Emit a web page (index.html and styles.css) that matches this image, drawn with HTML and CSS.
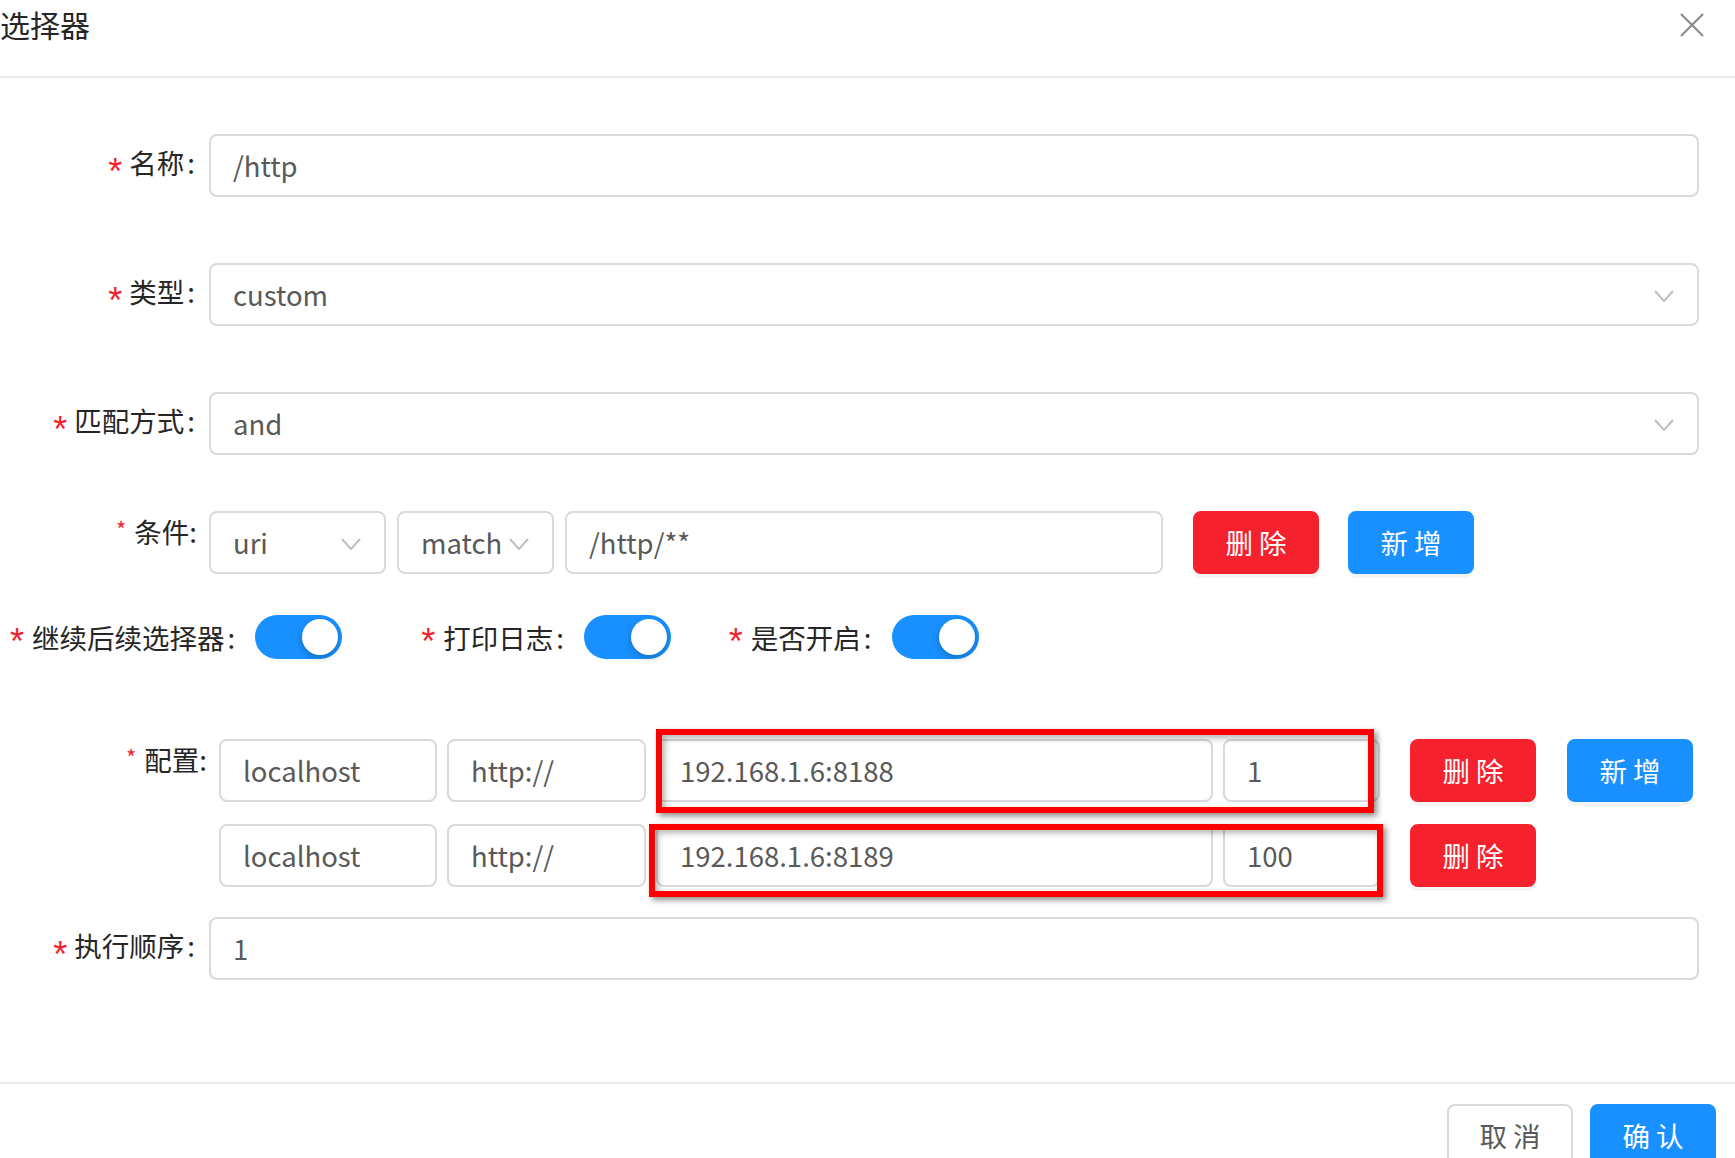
FILE: index.html
```html
<!DOCTYPE html>
<html lang="zh-CN">
<head>
<meta charset="utf-8">
<title>选择器</title>
<link rel="stylesheet" href="styles.css">
</head>
<body>
<div class="modal">
  <div class="modal-header">
    <div class="modal-title">选择器</div>
    <svg class="close" width="24" height="24" viewBox="0 0 24 24"><path d="M1 1 L23 23 M23 1 L1 23" stroke="#8c8c8c" stroke-width="2.2" fill="none"/></svg>
  </div>

  <div class="modal-body">
    <div class="row row-name">
      <div class="label"><span class="req">*</span>名称<span class="colon">:</span></div>
      <div class="input grow">/http</div>
    </div>

    <div class="row row-type">
      <div class="label"><span class="req">*</span>类型<span class="colon">:</span></div>
      <div class="input select grow">custom<svg class="arrow" width="20" height="12" viewBox="0 0 20 12"><path d="M1 1 L10 11 L19 1" stroke="#bfbfbf" stroke-width="2" fill="none"/></svg></div>
    </div>

    <div class="row row-match">
      <div class="label"><span class="req">*</span>匹配方式<span class="colon">:</span></div>
      <div class="input select grow">and<svg class="arrow" width="20" height="12" viewBox="0 0 20 12"><path d="M1 1 L10 11 L19 1" stroke="#bfbfbf" stroke-width="2" fill="none"/></svg></div>
    </div>

    <div class="row row-cond">
      <div class="label label-custom"><span class="req-small">*</span>条件:</div>
      <div class="input select w-uri">uri<svg class="arrow" width="20" height="12" viewBox="0 0 20 12"><path d="M1 1 L10 11 L19 1" stroke="#bfbfbf" stroke-width="2" fill="none"/></svg></div>
      <div class="input select w-op">match<svg class="arrow" width="20" height="12" viewBox="0 0 20 12"><path d="M1 1 L10 11 L19 1" stroke="#bfbfbf" stroke-width="2" fill="none"/></svg></div>
      <div class="input w-path">/http/**</div>
      <button class="btn btn-danger btn-gap">删 除</button>
      <button class="btn btn-primary btn-gap2">新 增</button>
    </div>

    <div class="row row-switch">
      <div class="sw-item sw-1">
        <span class="req">*</span><span class="sw-label">继续后续选择器<span class="colon">:</span></span>
        <span class="switch"><span class="knob"></span></span>
      </div>
      <div class="sw-item sw-2">
        <span class="req">*</span><span class="sw-label">打印日志<span class="colon">:</span></span>
        <span class="switch"><span class="knob"></span></span>
      </div>
      <div class="sw-item sw-3">
        <span class="req">*</span><span class="sw-label">是否开启<span class="colon">:</span></span>
        <span class="switch"><span class="knob"></span></span>
      </div>
    </div>

    <div class="config">
      <div class="row row-conf1">
        <div class="label label-custom label-conf"><span class="req-small">*</span>配置:</div>
        <div class="input w-host">localhost</div>
        <div class="input w-proto">http://</div>
        <div class="input w-ip">192.168.1.6:8188</div>
        <div class="input w-weight">1</div>
        <button class="btn btn-danger btn-gap">删 除</button>
        <button class="btn btn-primary btn-gap2">新 增</button>
      </div>
      <div class="row row-conf2">
        <div class="label label-conf"></div>
        <div class="input w-host">localhost</div>
        <div class="input w-proto">http://</div>
        <div class="input w-ip">192.168.1.6:8189</div>
        <div class="input w-weight">100</div>
        <button class="btn btn-danger btn-gap">删 除</button>
      </div>
      <div class="mark mark-1"></div>
      <div class="mark mark-2"></div>
    </div>

    <div class="row row-exec">
      <div class="label"><span class="req">*</span>执行顺序<span class="colon">:</span></div>
      <div class="input grow">1</div>
    </div>
  </div>

  <div class="modal-footer">
    <button class="btn btn-default">取 消</button>
    <button class="btn btn-primary">确 认</button>
  </div>
</div>
</body>
</html>
```

FILE: styles.css
```css
* { box-sizing: border-box; }
html, body {
  margin: 0;
  padding: 0;
  background: #fff;
}
body {
  font-family: "Noto Sans CJK SC", "Noto Sans", sans-serif;
  font-size: 27.5px;
  color: #595959;
  overflow: hidden;
}
.modal {
  width: 1735px;
  height: 1158px;
  overflow: hidden;
  background: #fff;
}
.modal-header {
  height: 78px;
  border-bottom: 2px solid #e8e8e8;
  display: flex;
  justify-content: space-between;
  align-items: flex-start;
  padding-right: 31px;
}
.modal-title {
  font-size: 30px;
  line-height: 48px;
  color: #262626;
  margin-left: 0;
}
.close {
  margin-top: 13px;
}
.modal-body {
  padding-top: 56px;
  height: 1004px;
}
.row {
  display: flex;
  align-items: center;
  height: 63px;
}
.row-type { margin-top: 66px; }
.row-match { margin-top: 66px; }
.row-cond { margin-top: 56px; }
.row-switch { margin-top: 41px; height: 44px; }
.config { position: relative; margin-top: 80px; }
.row-conf2 { margin-top: 22px; }
.row-exec { margin-top: 30px; }

.label {
  width: 209px;
  flex: none;
  text-align: right;
  padding-right: 14px;
  color: #262626;
  line-height: 40px;
  white-space: nowrap;
}
.req {
  color: #f5222d;
  font-family: "Liberation Sans", sans-serif;
  font-size: 36px;
  margin-right: 7px;
  vertical-align: -10px;
  line-height: 1;
}
.colon {
  margin-left: 3px;
}
.label-custom {
  align-self: flex-start;
  line-height: 26px;
  padding-top: 4px;
  padding-right: 12px;
}
.label-conf { width: 219px; }
.req-small {
  color: #f5222d;
  font-size: 22px;
  margin-right: 8px;
  vertical-align: 5px;
}

.input {
  height: 63px;
  border: 2px solid #d9d9d9;
  border-radius: 8px;
  padding: 0 22px;
  display: flex;
  align-items: center;
  line-height: 1;
  color: #595959;
  white-space: nowrap;
  flex: none;
  background: #fff;
}
.grow { width: 1490px; }
.select { position: relative; justify-content: space-between; padding-right: 23px; }
.arrow { flex: none; margin-top: 2px; }
.w-uri { width: 177px; }
.w-op { width: 157px; margin-left: 11px; }
.w-path { width: 598px; margin-left: 11px; }
.w-host { width: 218px; }
.w-proto { width: 199px; margin-left: 10px; }
.w-ip { width: 557px; margin-left: 10px; }
.w-weight { width: 157px; margin-left: 10px; }

.btn {
  height: 63px;
  width: 126px;
  border-radius: 8px;
  border: 2px solid transparent;
  font-family: inherit;
  font-size: 27.5px;
  color: #fff;
  padding: 0;
  flex: none;
  line-height: 1;
  box-shadow: 0 4px 0 rgba(0,0,0,0.045);
}
.btn-danger { background: #f5222d; border-color: #f5222d; }
.btn-primary { background: #1890ff; border-color: #1890ff; }
.btn-default { background: #fff; border-color: #d9d9d9; color: #595959; }
.btn-gap { margin-left: 30px; }
.btn-gap2 { margin-left: 29px; }
.row-conf1 .btn-gap, .row-conf2 .btn-gap { margin-left: 30px; }
.row-conf1 .btn-gap2 { margin-left: 31px; }

.sw-item {
  display: flex;
  align-items: center;
  color: #262626;
  white-space: nowrap;
}
.sw-1 { margin-left: 10px; }
.sw-2 { margin-left: 79px; }
.sw-3 { margin-left: 58px; }
.sw-item .req { margin-right: 8px; margin-top: 9px; }
.sw-label { margin-right: 20px; }
.switch {
  width: 87px;
  height: 44px;
  border-radius: 22px;
  background: #1890ff;
  display: flex;
  align-items: center;
  justify-content: flex-end;
  padding-right: 4px;
  flex: none;
}
.knob {
  width: 36px;
  height: 36px;
  border-radius: 50%;
  background: #fff;
  box-shadow: 0 3px 6px rgba(0, 35, 11, 0.25);
}

.mark {
  position: absolute;
  border: 6px solid #ff0000;
  box-shadow: 3px 3px 6px rgba(0,0,0,0.45), inset 3px 3px 6px rgba(0,0,0,0.3);
  pointer-events: none;
}
.mark-1 { left: 656px; top: -10px; width: 718px; height: 84px; }
.mark-2 { left: 649px; top: 85px; width: 734px; height: 73px; }

.modal-footer {
  border-top: 2px solid #e8e8e8;
  padding-top: 20px;
  padding-right: 19px;
  display: flex;
  justify-content: flex-end;
  gap: 17px;
}
.modal-footer .btn { width: 126px; }
```
